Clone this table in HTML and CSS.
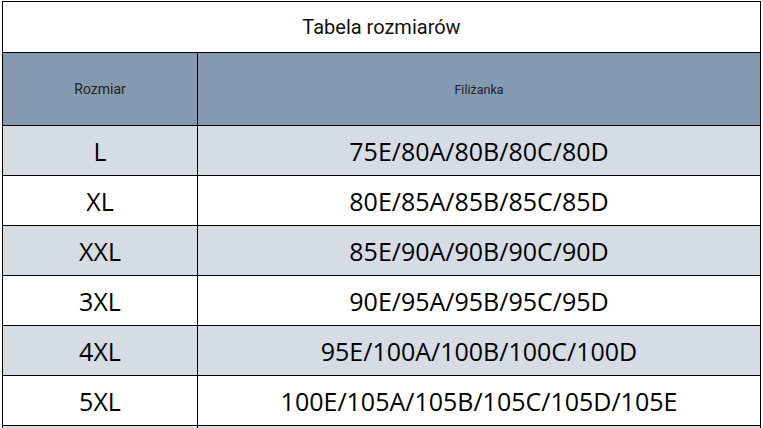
FILE: index.html
```html
<!DOCTYPE html>
<html lang="pl">
<head>
<meta charset="utf-8">
<title>Tabela rozmiarów</title>
<link rel="stylesheet" href="styles.css">
</head>
<body>
<div class="sheet">
  <div class="title">Tabela rozmiarów</div>
  <div class="row head">
    <div class="c1">Rozmiar</div>
    <div class="c2 small">Filiżanka</div>
  </div>
  <div class="row alt"><div class="c1">L</div><div class="c2">75E/80A/80B/80C/80D</div></div>
  <div class="row"><div class="c1">XL</div><div class="c2">80E/85A/85B/85C/85D</div></div>
  <div class="row alt"><div class="c1">XXL</div><div class="c2">85E/90A/90B/90C/90D</div></div>
  <div class="row"><div class="c1">3XL</div><div class="c2">90E/95A/95B/95C/95D</div></div>
  <div class="row alt"><div class="c1">4XL</div><div class="c2">95E/100A/100B/100C/100D</div></div>
  <div class="row"><div class="c1">5XL</div><div class="c2">100E/105A/105B/105C/105D/105E</div></div>
  <div class="row alt"><div class="c1"></div><div class="c2"></div></div>
</div>
</body>
</html>
```
FILE: styles.css
```css
html, body {
  margin: 0;
  padding: 0;
  background: #fff;
}
body {
  overflow: hidden;
  height: 428px;
}
.sheet {
  margin: 1px 0 0 2px;
  width: 759px;
  box-sizing: border-box;
  border: 1px solid #000;
  border-bottom: none;
  font-family: "Open Sans", "Noto Sans", sans-serif;
  color: #000;
}
.title {
  height: 50px;
  border-bottom: 1px solid #000;
  display: flex;
  align-items: center;
  justify-content: center;
  font-family: Roboto, "Noto Sans", sans-serif;
  font-size: 20px;
  color: #111;
}
.row {
  display: flex;
  height: 49px;
  border-bottom: 1px solid #000;
  font-size: 25px;
}
.row.head {
  height: 72px;
  background: #8599b1;
  font-family: Roboto, "Noto Sans", sans-serif;
  font-size: 14px;
  color: #222;
}
.row.alt {
  background: #d6dce4;
}
.c1 {
  width: 194px;
  border-right: 1px solid #000;
  display: flex;
  align-items: center;
  justify-content: center;
}
.c2 {
  flex: 1;
  display: flex;
  align-items: center;
  justify-content: center;
}
.c2.small {
  font-size: 12.5px;
}
```
